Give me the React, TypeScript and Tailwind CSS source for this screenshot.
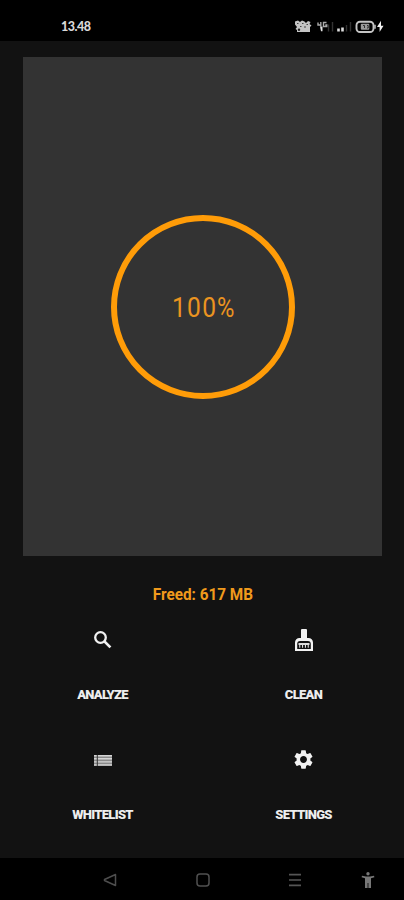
import type { ReactNode } from "react";
import { MdSettings } from "react-icons/md";

/* ── Status bar ─────────────────────────────────────────────────────── */
function StatusIcons() {
  return (
    <svg width="92" height="18" viewBox="0 0 92 18" fill="none">
      {/* network speed */}
      <g fill="#c4c4c4">
        <path d="M2 3.500l3-1 2 1.500 2-1.500 2.500 1 1.500 1.500 2-2L17.500 4l-1 2 2 1.500L17 9v5H4v-2L2.500 11 4 9 2 6.500z" />
      </g>
      <path d="M4 5.500h1.500M9 5.500h1.500M13.500 6.500H15M7 8.500h1.500M11 9h2" stroke="#444" strokeWidth="1" />
      <circle cx="6" cy="11.800" r="1.200" fill="#222" />
      {/* first sim */}
      <path d="M25 4.500v2.500h3.500M27.800 4v4.500M33.500 4.500h-3V8.500h3.300V7h-1.500" stroke="#aaa" strokeWidth="1.400" />
      <path d="M27 8.500h2.500v4.700H28z" fill="#e4e4e4" />
      <path d="M35.500 6.500v7M39.500 4v9.500" stroke="#333" strokeWidth="1.400" />
      {/* second sim */}
      <path d="M45.500 10.500v3M49.500 9.500v4" stroke="#ddd" strokeWidth="2.600" />
      <path d="M53.500 7v6.500M57.500 4v9.500" stroke="#333" strokeWidth="1.400" />
      {/* battery */}
      <rect x="63.500" y="3.700" width="17" height="10.300" rx="3.500" stroke="#c4c4c4" strokeWidth="1.900" />
      <rect x="67.800" y="5.800" width="8.500" height="6" rx="1" fill="#9a9a9a" />
      <path d="M70 7.500h1.500v2.500M74 7.500h1.200v2.500H74" stroke="#222" strokeWidth="0.900" />
      <path d="M82 6.800v4" stroke="#c4c4c4" strokeWidth="1.500" />
      <path d="M88 2.800L84 9h2.600v5l3.900-6.200H88z" fill="#f2f2f2" />
    </svg>
  );
}

function StatusBar() {
  return (
    <header className="flex h-[41px] shrink-0 items-start justify-between bg-black pt-[18px] pr-[19px] pl-[61px]">
      <span className="pt-px font-[Lato,sans-serif] text-[12.5px] leading-4 font-black tracking-[-0.5px] text-[#d8d8d8]">13.48</span>
      <StatusIcons />
    </header>
  );
}

/* ── Action icons ───────────────────────────────────────────────────── */
function SearchIcon() {
  return (
    <svg width="20" height="24" viewBox="0 0 20 24" fill="none" stroke="#f2f2f2">
      <circle cx="7.500" cy="9.500" r="5.300" strokeWidth="2.300" />
      <path d="M11.400 13.400l6 6" strokeWidth="2.700" />
    </svg>
  );
}

function BrushIcon() {
  return (
    <svg width="20" height="24" viewBox="0 0 20 24" fill="#f2f2f2">
      <path
        fillRule="evenodd"
        d="M8 1h4a1 1 0 0 1 1 1v8h1.500a4.500 4.500 0 0 1 4.500 4.500V23H1v-8.500A4.500 4.500 0 0 1 5.500 10H7V2a1 1 0 0 1 1-1zM3.200 21h13.600V16c0-1.900-1-3-2.900-3H6.100c-1.900 0-2.900 1.100-2.900 3z"
      />
      <path d="M4.500 15h11v2h-11zM5.200 16h1.100v3.700H5.200zM8 16h1.100v3.700H8zM10.900 16H12v3.700h-1.100zM13.700 16h1.100v3.700h-1.100z" fill="#ddd" />
    </svg>
  );
}

function ListIcon() {
  return (
    <svg width="20" height="24" viewBox="0 0 20 24" fill="none">
      <path d="M1 7h18v10.500H1z" fill="#8a8a8a" />
      <path d="M1 7.700h18M1 10.800h18M1 13.900h18M1 17h18" stroke="#d6d6d6" strokeWidth="1.400" />
      <path d="M4.300 7v11" stroke="#333" strokeWidth="1" />
    </svg>
  );
}

interface ActionProps {
  icon: ReactNode;
  label: string;
}

function Action({ icon, label }: ActionProps) {
  return (
    <button className="flex h-[119.500px] flex-col items-center">
      <span className="flex h-6 items-center justify-center text-[#f2f2f2]">{icon}</span>
      <span className="mt-[33px] text-[13px] leading-5 font-black tracking-[-0.7px] text-[#ededed]">{label}</span>
    </button>
  );
}

/* ── Navigation bar ─────────────────────────────────────────────────── */
function NavBar() {
  return (
    <nav className="flex h-[42px] shrink-0 items-center bg-black pt-px pl-[102px]">
      <svg width="16" height="16" viewBox="0 0 16 16" fill="none" stroke="#4e4e4e" strokeWidth="1.500">
        <path d="M13.500 2.500v11L2.500 8.500v-1z" strokeLinejoin="round" />
      </svg>
      <svg className="ml-[77px]" width="16" height="16" viewBox="0 0 16 16" fill="none" stroke="#505050" strokeWidth="1.500">
        <rect x="2" y="2" width="12" height="12" rx="3" />
      </svg>
      <svg className="ml-[76px]" width="16" height="16" viewBox="0 0 16 16" stroke="#555" strokeWidth="1.700">
        <path d="M2 2.700h12M2 8h12M2 13.300h12" />
      </svg>
      <svg className="ml-[57px]" width="16" height="18" viewBox="0 0 16 18" fill="#777">
        <circle cx="8" cy="2.800" r="1.700" />
        <path d="M2 4.700l4 .8h4l4-.8.4 1.500-3.400 1V17H8.400v-5h-.8v5H5V7.200l-3.400-1z" />
      </svg>
    </nav>
  );
}

export default function App() {
  return (
    <div className="flex h-[900px] w-[404px] flex-col overflow-hidden bg-[#121212] font-[Roboto,sans-serif]">
      <StatusBar />

      <main className="flex min-h-0 flex-1 flex-col pt-4">
        <section className="mr-[22px] ml-[23px] flex h-[499px] shrink-0 items-center justify-center bg-[#333333]">
          <div className="flex size-[184px] items-center justify-center rounded-full border-[6px] border-[#ff9c08]">
            <div className="flex w-[61px] pt-[3px] text-[27px] leading-8 text-[#eb9420]">
              <span className="w-[45px] origin-left scale-x-[0.91] tracking-[1.400px]">100</span>
              <span className="w-[17px] origin-left scale-x-[0.88]">%</span>
            </div>
          </div>
        </section>

        <p className="mt-[26px] origin-center scale-x-[0.9] pl-[2px] text-center text-[17px] leading-6 font-bold text-[#f09a1c]">
          Freed: 617 MB
        </p>

        <div className="mt-[22px] grid grid-cols-2 pl-[2px]">
          <Action icon={<SearchIcon />} label="ANALYZE" />
          <Action icon={<BrushIcon />} label="CLEAN" />
          <Action icon={<ListIcon />} label="WHITELIST" />
          <Action icon={<MdSettings className="size-[23px]" />} label="SETTINGS" />
        </div>
      </main>

      <NavBar />
    </div>
  );
}
